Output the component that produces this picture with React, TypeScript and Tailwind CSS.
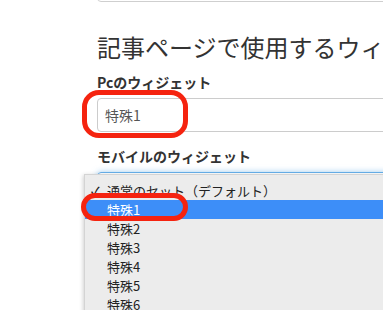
import React from 'react';

const options = [
    { label: "通常のセット（デフォルト）", checked: true },
    { label: "特殊1", active: true },
    { label: "特殊2" },
    { label: "特殊3" },
    { label: "特殊4" },
    { label: "特殊5" },
    { label: "特殊6" },
    { label: "特殊7" },
];

const App = () => {
    return (
        <div className="relative w-[383px] h-[310px] overflow-hidden bg-white font-['Noto_Sans_CJK_JP','Noto_Sans',sans-serif] text-[#333]">
            <div className="flex flex-col pl-[97px]">
                {/* bottom of the previous panel */}
                <div className="h-[12px] -mt-[10px] w-[400px] border border-[#cfcfcf] rounded-[4px]" />

                <h2 className="mt-[30px] text-[24px] leading-[30px] font-normal whitespace-nowrap text-[#333]">
                    記事ページで使用するウィジェット
                </h2>

                <div className="flex flex-col gap-[6px] mt-[10px]">
                    <label className="text-[14px] leading-[20px] font-bold whitespace-nowrap">Pcのウィジェット</label>
                    <div className="h-[34px] w-[400px] border border-[#ccc] rounded-[4px] flex items-center pl-[7px] text-[14px] text-[#555]">
                        特殊1
                    </div>
                </div>

                <div className="flex flex-col gap-[6px] mt-[14px]">
                    <label className="text-[14px] leading-[20px] font-bold whitespace-nowrap">モバイルのウィジェット</label>
                    <div className="h-[34px] w-[400px] border border-[#66afe9] rounded-[4px] shadow-[0_0_6px_rgba(102,175,233,0.6)]" />
                </div>
            </div>

            {/* open select menu */}
            <div className="absolute left-[84px] top-[174px] w-[320px] h-[150px] flex flex-col bg-[#ececec] border-t border-l border-[#d4d4d4] shadow-[-1px_1px_4px_rgba(0,0,0,0.18)] pt-[6px]">
                {options.map((opt, i) => (
                    <div
                        key={i}
                        className={`relative h-[19px] shrink-0 flex items-center pl-[22px] text-[13px] whitespace-nowrap ${opt.active ? 'bg-[#3d8ef8] text-white' : 'text-[#222]'}`}
                    >
                        {opt.checked && <span className="absolute left-[6px] text-[12px] font-bold">✓</span>}
                        {opt.label}
                    </div>
                ))}
            </div>

            {/* red annotations */}
            <div className="absolute left-[82px] top-[90px] w-[106px] h-[48px] border-[5px] border-[#f5230f] rounded-[17px]" />
            <div className="absolute left-[81px] top-[193px] w-[107px] h-[28px] border-[5px] border-[#f5230f] rounded-[14px]" />
        </div>
    );
};

export default App;
